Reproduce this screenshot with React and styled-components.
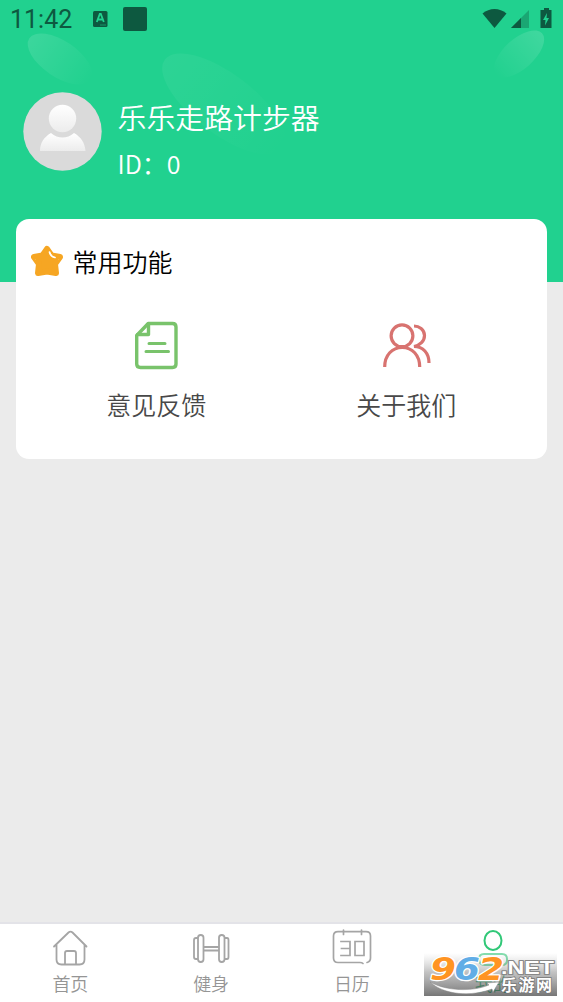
import styled, { createGlobalStyle } from "styled-components";

const GlobalStyle = createGlobalStyle`
  * {
    box-sizing: border-box;
  }

  body {
    margin: 0;
    background-color: #ebebeb;
    font-family: "Noto Sans CJK SC", sans-serif;
    font-weight: 350;
  }
`;

const Page = styled.div`
  display: flex;
  flex-direction: column;
  position: relative;
  block-size: 1002px;
  inline-size: 563px;
  overflow: hidden;
  background-color: #ebebeb;
`;

const Header = styled.header`
  position: relative;
  flex: none;
  block-size: 282px;
  background-color: #21d18f;
`;

const Leaves = styled.svg`
  position: absolute;
  inset: 0;
`;

const StatusBar = styled.div`
  display: flex;
  position: relative;
  align-items: center;
  block-size: 38px;
  padding-inline: 10px;
  color: #0d5940;
`;

const Clock = styled.span`
  inline-size: 82px;
  padding-block-start: 2px;
  font: 400 25px/38px Roboto, sans-serif;
`;

const KeyboardIcon = styled.svg`
  margin-inline-end: 15px;
`;

const NoticeSquare = styled.span`
  inline-size: 24px;
  block-size: 24px;
  border-radius: 2px;
  background-color: #0d5940;
`;

const SystemIcons = styled.svg`
  margin-inline: auto 0;
`;

const Profile = styled.div`
  display: flex;
  position: relative;
  gap: 15.5px;
  padding: 54px 0 0 23px;
`;

const ProfileText = styled.div`
  display: flex;
  flex-direction: column;
  padding-block-start: 3px;
  color: white;
`;

const UserName = styled.h1`
  margin: 0;
  font-size: 28.9px;
  font-weight: 350;
  line-height: 42px;
`;

const UserId = styled.span`
  margin-block-start: 8px;
  font-size: 25px;
  line-height: 36px;
`;

const Card = styled.section`
  position: relative;
  flex: none;
  block-size: 240px;
  margin: -63px 16px 0 15.5px;
  padding-block-start: 23px;
  border-radius: 13px;
  background-color: white;
`;

const CardTitle = styled.h2`
  display: flex;
  align-items: center;
  gap: 9px;
  margin: 0;
  padding-inline-start: 15px;
  color: #000;
  font-size: 25px;
  font-weight: 350;
  line-height: 38px;
`;

const Features = styled.div`
  display: grid;
  grid-template-columns: 250px 250px;
  justify-content: center;
  margin-block-start: 40px;
`;

const Feature = styled.div`
  display: flex;
  flex-direction: column;
  align-items: center;
  gap: 15px;
  color: #484848;
  font-size: 25px;
  line-height: 38px;
`;

const TabBar = styled.nav`
  display: grid;
  grid-template-columns: repeat(4, 1fr);
  block-size: 80px;
  margin-block-start: auto;
  border-block-start: 2px solid #e3e3e8;
  background-color: white;
`;

const Tab = styled.div`
  display: flex;
  flex-direction: column;
  align-items: center;
  padding-block-start: 5px;
  color: ${({ $active }) => ($active ? "#0bb065" : "#959595")};
  font-size: 18px;
  line-height: 26px;

  svg {
    margin-block-end: 1px;
  }
`;

const Watermark = styled.svg`
  position: absolute;
  inset: 948px auto auto 424px;
`;

const LeafShapes = () => (
  <Leaves width="563" height="282">
    <defs>
      <linearGradient id="leafLeft">
        <stop stopColor="#fff" stopOpacity=".12" />
        <stop offset="1" stopColor="#fff" stopOpacity="0" />
      </linearGradient>
      <linearGradient id="leafRight">
        <stop stopColor="#fff" stopOpacity="0" />
        <stop offset="1" stopColor="#fff" stopOpacity=".14" />
      </linearGradient>
    </defs>
    <ellipse cx="60" cy="59" rx="37" ry="18" transform="rotate(34 60 59)" fill="url(#leafLeft)" />
    <ellipse cx="224" cy="104" rx="74" ry="30" transform="rotate(37 224 104)" fill="url(#leafLeft)" opacity=".45" />
    <ellipse cx="519" cy="54" rx="31" ry="15" transform="rotate(-42 519 54)" fill="url(#leafRight)" />
  </Leaves>
);

const Avatar = () => (
  <svg width="79" height="79" viewBox="0 0 79 79">
    <defs>
      <linearGradient id="person" x2="0" y2="1">
        <stop stopColor="#fff" />
        <stop offset="1" stopColor="#ececec" />
      </linearGradient>
    </defs>
    <circle cx="39.5" cy="39.5" r="39.2" fill="#dadada" />
    <circle cx="39.5" cy="26.5" r="13.7" fill="url(#person)" />
    <path d="M17 59c0-8 4-14 11-18 7 6 16 6 23 0 7 4 11 10 11.500 18z" fill="url(#person)" />
  </svg>
);

const StarIcon = () => (
  <svg width="33" height="32" viewBox="0 0 33 32">
    <path
      d="M16 4 20.500 10.500 29 12 24 19 25 28 16 26.500 7 28 8 19 3 12 11.500 10.500z"
      fill="#f6a623"
      stroke="#f6a623"
      strokeWidth="6"
      strokeLinejoin="round"
    />
    <path d="M18.500 7c.5 3 2 4.700 5.500 5.500" fill="none" stroke="#fff" strokeWidth="1.700" strokeLinecap="round" />
  </svg>
);

const FeedbackIcon = () => (
  <svg width="48" height="50" viewBox="0 0 48 50" fill="none" stroke="#79c36b" strokeWidth="3.400" strokeLinecap="round" strokeLinejoin="round">
    <path d="M16.200 3.500H40.500Q44 3.500 44 7V44Q44 47.500 40.500 47.500H8.500Q4.700 47.500 4.700 44V15.500z" />
    <path d="M16.500 4V14.500H5.500" />
    <path d="M17 23.500H33M14 31.500H36.500" strokeWidth="3" />
  </svg>
);

const AboutIcon = () => (
  <svg width="50" height="50" viewBox="0 0 50 50" fill="none" stroke="#d87370" strokeWidth="3.200">
    <circle cx="21" cy="15.800" r="10.900" />
    <path d="M3.700 47c0-12 7.500-19.500 17.500-19.500s17.500 7.500 17.500 19.500" />
    <path d="M33 6c5 0 10.500 3.500 10.500 9.500 0 5.500-4.500 9.800-10.500 11 9 0 15 6.500 15 16.500" />
  </svg>
);

const HomeIcon = () => (
  <svg width="40" height="40" viewBox="0 0 40 40" fill="none" stroke="#a5a5a5" strokeWidth="1.800" strokeLinecap="round" strokeLinejoin="round">
    <path d="m4 17.500 14.500-14q2-1.700 4 0l14 14M6.500 16v14.500q0 5 5 5h18q5 0 5-5V16" />
    <path d="M15 35V24q0-2 2-2h7q2 0 2 2v11" />
  </svg>
);

const FitnessIcon = () => (
  <svg width="40" height="40" viewBox="0 0 40 40" fill="none" stroke="#a5a5a5" strokeWidth="1.800">
    <rect x="7" y="6" width="5.500" height="27" rx="2.700" />
    <rect x="28" y="6" width="5.500" height="27" rx="2.700" />
    <path d="M7 9H5Q3 9 3 11v17q0 2 2 2h2M33.500 9H36q1.500 0 1.500 2v17q0 2-1.500 2h-2.500M12.500 18H28M12.500 21.500H28" />
  </svg>
);

const CalendarIcon = () => (
  <svg width="40" height="40" viewBox="0 0 40 40" fill="none" stroke="#a5a5a5" strokeWidth="1.700" strokeLinecap="round">
    <path d="M8 2.700H6Q1.500 2.700 1.500 7v22q0 4.500 4.500 4.500h22q2 0 3 1M33 2.700h1q4.500 0 4.500 4.300v22q0 3.500-3.500 4.500M8 2.700h25M11.500 1v4.500M29.500 1v4.500" />
    <path d="M9 12.500h9v14H9M9.500 19.500H18M23 12.500h9v14h-9z" strokeLinecap="square" />
  </svg>
);

const MineIcon = () => (
  <svg width="40" height="40" viewBox="0 0 40 40" fill="none" stroke="#31c878" strokeWidth="2">
    <ellipse cx="20" cy="11.500" rx="8.500" ry="9.500" />
    <path d="M11 25h18q5 0 5 5v1q0 5-5 5H12q-6 0-6-6 0-5 5-5z" />
  </svg>
);

const SiteMark = () => (
  <Watermark width="139" height="52" viewBox="0 0 139 52">
    <defs>
      <linearGradient id="shade" x2="0" y2="1">
        <stop stopColor="#fff" stopOpacity=".4" />
        <stop offset=".45" stopColor="#999" stopOpacity=".6" />
        <stop offset="1" stopColor="#444" stopOpacity=".73" />
      </linearGradient>
    </defs>
    <path d="M0 5h133v43H0z" fill="url(#shade)" />
    <path d="M6 34c16 9 42 10 59 3l-2-2 12-1-6 10-1-3C47 49 20 47 6 34z" fill="#fff" stroke="#888" strokeWidth=".5" />
    <g fontFamily="DejaVu Sans, sans-serif" fontWeight="700" stroke="#fff" paintOrder="stroke" strokeLinejoin="round">
      <g fontSize="32" fontStyle="italic" strokeWidth="2.500">
        <text x="6" y="32" fill="#ff9422" textLength="26" lengthAdjust="spacingAndGlyphs">9</text>
        <text x="30" y="32" fill="#61ade6" textLength="26" lengthAdjust="spacingAndGlyphs">6</text>
        <text x="54" y="32" fill="#ff9422" textLength="26" lengthAdjust="spacingAndGlyphs">2</text>
      </g>
      <text x="77" y="26" fontSize="18" fontFamily="Liberation Sans, sans-serif" fill="#fff" stroke="#888" strokeWidth="2" textLength="53" lengthAdjust="spacingAndGlyphs">.NET</text>
    </g>
    <text x="77" y="43" fontSize="16" fontWeight="700" fill="#fff" stroke="#777" strokeWidth="1.500" paintOrder="stroke" textLength="51">乐游网</text>
  </Watermark>
);

const tabs = [
  { label: "首页", Icon: HomeIcon },
  { label: "健身", Icon: FitnessIcon },
  { label: "日历", Icon: CalendarIcon },
  { label: "我的", Icon: MineIcon, active: true },
];

export default function App() {
  return (
    <>
      <GlobalStyle />

      <Page>
        <Header>
          <LeafShapes />
          <StatusBar>
            <Clock>11:42</Clock>
            <KeyboardIcon width="16" height="18" viewBox="0 0 16 18">
              <rect x="1" y="1" width="14.500" height="16" rx="1.500" fill="currentColor" />
              <path d="m4.800 12 3-8h1l3 8M6 9.500h4.500" fill="none" stroke="#21d18f" strokeWidth="1.800" />
              <path d="M8.500 15h6" stroke="#21d18f" strokeDasharray="1 1" />
            </KeyboardIcon>
            <NoticeSquare />
            <SystemIcons width="72" height="24" viewBox="0 0 72 24" fill="currentColor">
              <path d="M1.500 6.500c7-6 17-6 24 0L13.500 21z" />
              <path d="M48 3v18h-18z" opacity=".35" />
              <path d="M40 11v10h-10z" />
              <path d="M60.500 3H63V1h5v2h2.500v18h-11V3z" />
              <path d="m66 6-4 7h2.500l-.5 5.500 4-7.500h-2.500z" fill="#21d18f" />
            </SystemIcons>
          </StatusBar>
          <Profile>
            <Avatar />
            <ProfileText>
              <UserName>乐乐走路计步器</UserName>
              <UserId>ID：0</UserId>
            </ProfileText>
          </Profile>
        </Header>

        <Card>
          <CardTitle>
            <StarIcon />
            常用功能
          </CardTitle>
          <Features>
            <Feature>
              <FeedbackIcon />
              意见反馈
            </Feature>
            <Feature>
              <AboutIcon />
              关于我们
            </Feature>
          </Features>
        </Card>

        <TabBar>
          {tabs.map(({ label, Icon, active }) => (
            <Tab key={label} $active={active}>
              <Icon />
              {label}
            </Tab>
          ))}
        </TabBar>

        <SiteMark />
      </Page>
    </>
  );
}
